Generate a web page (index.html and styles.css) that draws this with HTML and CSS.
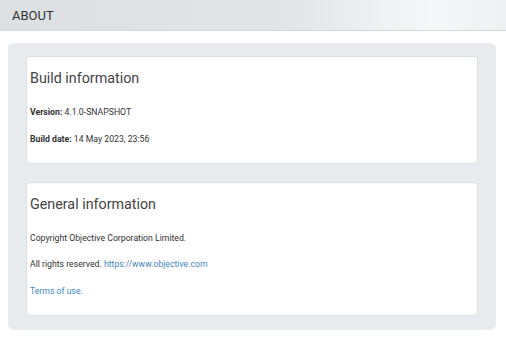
FILE: index.html
```html
<!DOCTYPE html>
<html lang="en">
<head>
    <meta charset="UTF-8">
    <meta name="viewport" content="width=device-width, initial-scale=1.0">
    <title>About</title>
    <link rel="stylesheet" href="styles.css">
</head>
<body>

    <div class="page-header">
        <h1>ABOUT</h1>
    </div>

    <div class="about-panel">
        <!-- Build info -->
        <div class="info-card">
            <h2>Build information</h2>
            <p><b>Version:</b> 4.1.0-SNAPSHOT</p>
            <p><b>Build date:</b> 14 May 2023, 23:56</p>
        </div>

        <!-- General info -->
        <div class="info-card">
            <h2>General information</h2>
            <p>Copyright Objective Corporation Limited.</p>
            <p>All rights reserved. <a href="#">https://www.objective.com</a></p>
            <p><a href="#">Terms of use.</a></p>
        </div>
    </div>

</body>
</html>
```

FILE: styles.css
```css
/* Basic Reset */
* {
    margin: 0;
    padding: 0;
    box-sizing: border-box;
}

body {
    font-family: 'Roboto', 'Liberation Sans', sans-serif;
    background-color: #fff;
    color: #333;
}

.page-header {
    height: 31px;
    padding-left: 12px;
    display: flex;
    align-items: center;
    background: linear-gradient(to right, #dce0e3 0%, #e1e5e8 55%, #f6f7f8 86%, #eef0f2 100%);
    border-bottom: 1px solid #d3d7da;
}

.page-header h1 {
    font-size: 13px;
    font-weight: 400;
    color: #333;
}

.about-panel {
    margin: 12px 10px 0 8px;
    padding: 13px 18px 14px;
    background-color: #e9ecef;
    border-radius: 6px;
    display: flex;
    flex-direction: column;
    gap: 18px;
}

.info-card {
    background: #fff;
    border: 1px solid #dcdfe2;
    border-radius: 4px;
    padding: 13px 3px 11px;
}

.info-card h2 {
    font-size: 14.3px;
    font-weight: 400;
    color: #444;
    margin-bottom: 21px;
}

.info-card p {
    font-size: 8.7px;
    color: #333;
    margin-bottom: 16.5px;
}

.info-card p:last-child {
    margin-bottom: 8px;
}

.info-card a {
    color: #3f86c2;
    text-decoration: none;
}
```
